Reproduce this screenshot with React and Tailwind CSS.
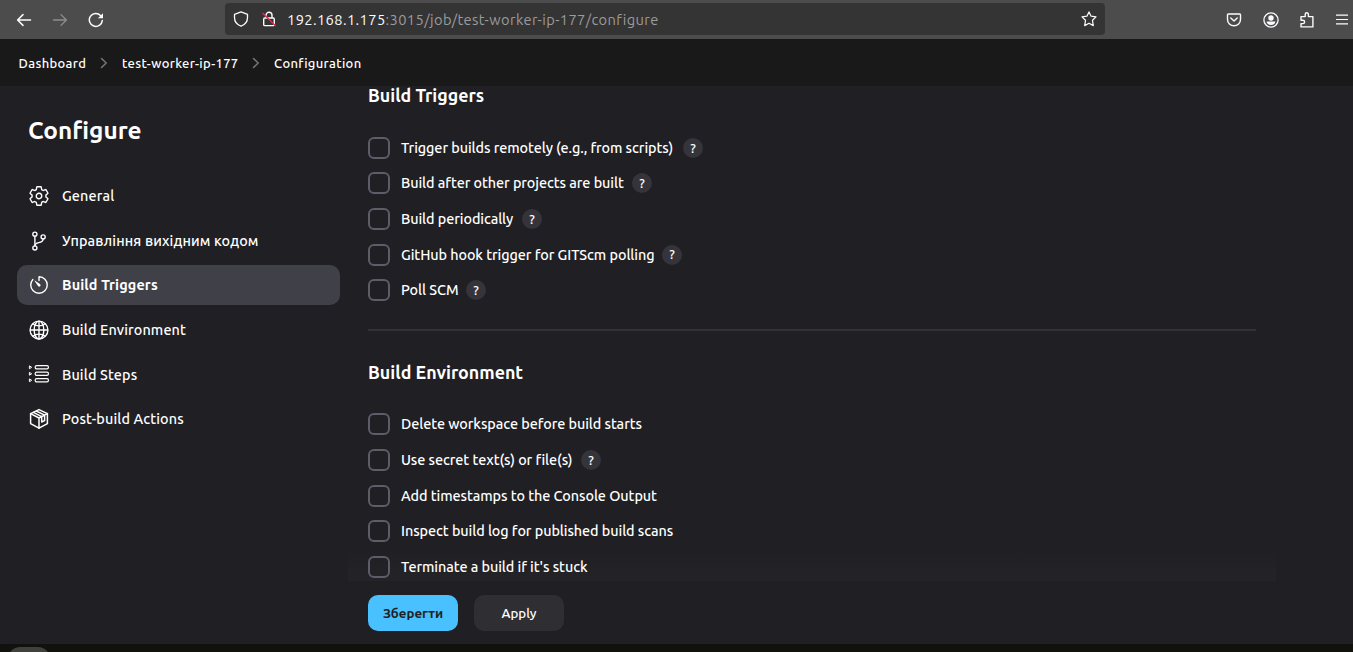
import { IoSettingsOutline, IoGitBranchOutline, IoTimerOutline, IoGlobeOutline } from "react-icons/io5";

function StepsIcon() {
  return (
    <svg width="22" height="22" viewBox="0 0 22 22" fill="none" stroke="currentColor" strokeWidth="1.2">
      {[4.3, 10.8, 17.3].map((y) => (
        <g key={y}>
          <rect x="7.2" y={y - 1.6} width="13.2" height="3.2" rx="1.4" />
          <path d={`M1.4 ${y - 1.4}L3.7 ${y}L1.4 ${y + 1.4}Z`} strokeWidth="1" strokeLinejoin="round" />
        </g>
      ))}
    </svg>
  );
}

function PackageIcon() {
  return (
    <svg width="22" height="22" viewBox="0 0 22 22" fill="none" stroke="currentColor" strokeWidth="1.5" strokeLinejoin="round" strokeLinecap="round">
      <path d="M11 1.6L19.4 5.6V15.6L11 20.2L2.6 15.6V5.6Z" />
      <path d="M2.6 5.6L11 10L19.4 5.6M11 10V20.2M5.4 4.4L13.7 8.6V14L16.6 12.6V7.1L8.3 3" />
    </svg>
  );
}

const nav = [
  { label: "General", icon: <IoSettingsOutline size={22} /> },
  { label: "Управління вихідним кодом", icon: <IoGitBranchOutline size={22} /> },
  { label: "Build Triggers", icon: <IoTimerOutline size={22} />, active: true },
  { label: "Build Environment", icon: <IoGlobeOutline size={22} /> },
  { label: "Build Steps", icon: <StepsIcon /> },
  { label: "Post-build Actions", icon: <PackageIcon /> },
];

const triggers = [
  { label: "Trigger builds remotely (e.g., from scripts)", help: true, cls: "w-[274px]" },
  { label: "Build after other projects are built", help: true, cls: "w-[223px]" },
  { label: "Build periodically", help: true, cls: "w-[113px]" },
  { label: "GitHub hook trigger for GITScm polling", help: true, cls: "w-[253px]" },
  { label: "Poll SCM", help: true, cls: "w-[57px]" },
];

const environment = [
  { label: "Delete workspace before build starts", cls: "w-[241px]" },
  { label: "Use secret text(s) or file(s)", help: true, cls: "w-[172px]" },
  { label: "Add timestamps to the Console Output", cls: "w-[255px]" },
  { label: "Inspect build log for published build scans", cls: "w-[272px]" },
  { label: "Terminate a build if it's stuck", cls: "w-[187px]" },
];

function Options({ items }) {
  return (
    <ul>
      {items.map((o) => (
        <li key={o.label} className="flex h-[35.6px] items-center">
          <span className="size-[22px] shrink-0 rounded-md border-2 border-[#5e5c68]" />
          <span className={`ml-[11px] pt-[1.6px] text-[14.4px] font-medium tracking-[-0.07px] whitespace-nowrap ${o.cls}`}>{o.label}</span>
          {o.help && (
            <span className="ml-2 flex size-5 items-center justify-center rounded-full bg-[#35343a] text-[13.5px] font-medium">?</span>
          )}
        </li>
      ))}
    </ul>
  );
}

function BrowserBar() {
  return (
    <header className="flex h-[39px] shrink-0 items-center bg-[#4c4c4c] text-[#fbfbfe]">
      <div className="flex w-[225px] items-center gap-5 pl-4">
        <svg width="16" height="16" viewBox="0 0 16 16" fill="none" stroke="currentColor" strokeWidth="1.5" strokeLinecap="round" strokeLinejoin="round"><path d="M14.5 8H1.8M7 2.6L1.6 8L7 13.4" /></svg>
        <svg width="16" height="16" viewBox="0 0 16 16" fill="none" stroke="#8e8e90" strokeWidth="1.3" strokeLinecap="round" strokeLinejoin="round"><path d="M1.5 8H14.2M9 2.6L14.4 8L9 13.4" /></svg>
        <svg width="16" height="16" viewBox="0 0 16 16" fill="none" stroke="currentColor" strokeWidth="1.5" strokeLinecap="round"><path d="M14.3 8.6A6.5 6.5 0 1 1 12.5 3.4" /><path d="M15 1.2V6.3H9.9Z" fill="currentColor" stroke="none" /></svg>
      </div>
      <div className="-mt-px flex h-8 w-[880px] items-center rounded bg-[#343434] pr-2 pl-2">
        <svg width="16" height="16" viewBox="0 0 16 16" fill="none" stroke="currentColor" strokeWidth="1.3" strokeLinejoin="round"><path d="M8 .9L14.5 3.3V6.6C14.5 10.8 11.8 13.9 8 15.2C4.2 13.9 1.5 10.8 1.5 6.6V3.3Z" /></svg>
        <svg className="ml-3" width="16" height="16" viewBox="0 0 16 16" fill="none" stroke="currentColor" strokeWidth="1.4" strokeLinejoin="round"><path d="M5 7V4.3A3 3 0 0 1 11 4.3V7" /><rect x="2.7" y="7" width="10.6" height="7.6" rx="1.2" /><path d="M1.5 2L14.7 15" stroke="#e22850" /></svg>
        <span className="ml-[10px] flex-1 pt-[2px] text-[14.67px] tracking-[0.39px] text-[#9b9b9d]"><span className="text-[#fbfbfe]">192.168.1.175</span>:3015/job/test-worker-ip-177/configure</span>
        <svg width="16" height="16" viewBox="0 0 16 16" fill="none" stroke="currentColor" strokeWidth="1.2" strokeLinejoin="round"><path d="M8 .9L10.1 5.2L15 5.9L11.5 9.3L12.3 14.6L8 12.3L3.7 14.6L4.5 9.3L1 5.9L5.9 5.2Z" /></svg>
      </div>
      <div className="ml-[121px] flex shrink-0 items-center gap-5">
        <svg width="16" height="16" viewBox="0 0 16 16" fill="none" stroke="currentColor" strokeWidth="1.4" strokeLinecap="round" strokeLinejoin="round"><path d="M2.2 2H13.8Q14.5 2 14.5 2.8V7.5A6.5 6.3 0 0 1 1.5 7.5V2.8Q1.5 2 2.2 2ZM4.8 6L8 9L11.2 6" /></svg>
        <svg className="ml-[0.5px]" width="16" height="16" viewBox="0 0 16 16" fill="currentColor"><circle cx="8" cy="8" r="7.1" fill="none" stroke="currentColor" strokeWidth="1.3" /><circle cx="8" cy="6" r="2.7" /><path d="M3.6 9.6H12.4Q12 13 8 13T3.6 9.6Z" /></svg>
        <svg width="16" height="16" viewBox="0 0 16 16" fill="none" stroke="currentColor" strokeWidth="1.4" strokeLinejoin="round"><path d="M2 4.6H6.2V2.4A1.6 1.6 0 0 1 9.4 2.4V4.6H13.9V14.9H2V11.6H3.9A1.7 1.7 0 0 0 3.9 8.2H2Z" /></svg>
        <svg className="-ml-[0.5px]" width="16" height="16" viewBox="0 0 16 16" stroke="currentColor" strokeWidth="1.2"><path d="M2 3.2H14M2 7.5H14M2 11.8H14" /></svg>
      </div>
    </header>
  );
}

function Chevron({ className }) {
  return (
    <svg className={className} width="8" height="12" viewBox="0 0 8 12" fill="none" stroke="#77767c" strokeWidth="1.5" strokeLinecap="round" strokeLinejoin="round"><path d="M1.5 1.5L6.2 6L1.5 10.5" /></svg>
  );
}

export default function App() {
  return (
    <div className="flex h-[652px] w-[1353px] flex-col overflow-hidden bg-[#201f24] font-['Ubuntu','Noto_Sans',sans-serif] text-white">
      <BrowserBar />
      <nav className="flex h-[47px] shrink-0 items-center bg-[#19191a] pl-[18.6px] text-[13px] font-medium tracking-[0.35px] whitespace-nowrap">
        <span className="w-[68.4px] pt-[2px]">Dashboard</span>
        <Chevron className="mx-[13px]" />
        <span className="ml-px w-[117px] pt-[2px]">test-worker-ip-177</span>
        <Chevron className="mx-[13px]" />
        <span className="ml-px pt-[2px]">Configuration</span>
      </nav>
      <div className="flex h-[558px] shrink-0">
        <aside className="w-[340px] shrink-0 pt-7 pl-[17px]">
          <h1 className="mb-[30px] pl-[11px] text-[24.4px] leading-8 font-bold">Configure</h1>
          {nav.map((n) => (
            <a key={n.label} className={`mb-[4.6px] flex h-10 items-center rounded-[10px] pl-[11px] text-[14.4px] tracking-[0.13px] whitespace-nowrap ${n.active ? "bg-[#404048] font-bold" : "font-medium"}`}>
              {n.icon}
              <span className="ml-3 pt-[2px]">{n.label}</span>
            </a>
          ))}
        </aside>
        <main className="relative ml-7 flex w-[888px] flex-col">
          <div className="absolute top-[464px] -left-5 h-[31px] w-[928px] bg-linear-to-b from-transparent to-[#242428]" />
          <div className="relative h-[495px] overflow-hidden">
            <h2 className="mb-[24px] h-5 text-[17.8px] leading-[19px] font-bold">Build Triggers</h2>
            <Options items={triggers} />
            <hr className="mt-[21px] mb-[31.6px] border-t-2 border-[#323137]" />
            <h2 className="mb-[24px] h-5 text-[17.85px] leading-[19px] font-bold">Build Environment</h2>
            <Options items={environment} />
          </div>
          <div className="flex gap-4 pt-[14px] text-[13.3px]">
            <button className="h-9 w-[90px] rounded-[10px] bg-[#4ac1ff] pt-px font-bold text-[#201f24]">Зберегти</button>
            <button className="h-9 w-[90px] rounded-[10px] bg-[#2f2e33] pt-px font-medium">Apply</button>
          </div>
        </main>
      </div>
      <footer className="h-2 shrink-0 overflow-hidden bg-[#11110e] pt-[3px] pl-2">
        <div className="h-4 w-[42px] rounded-t-xl bg-[#40403f]" />
      </footer>
    </div>
  );
}
